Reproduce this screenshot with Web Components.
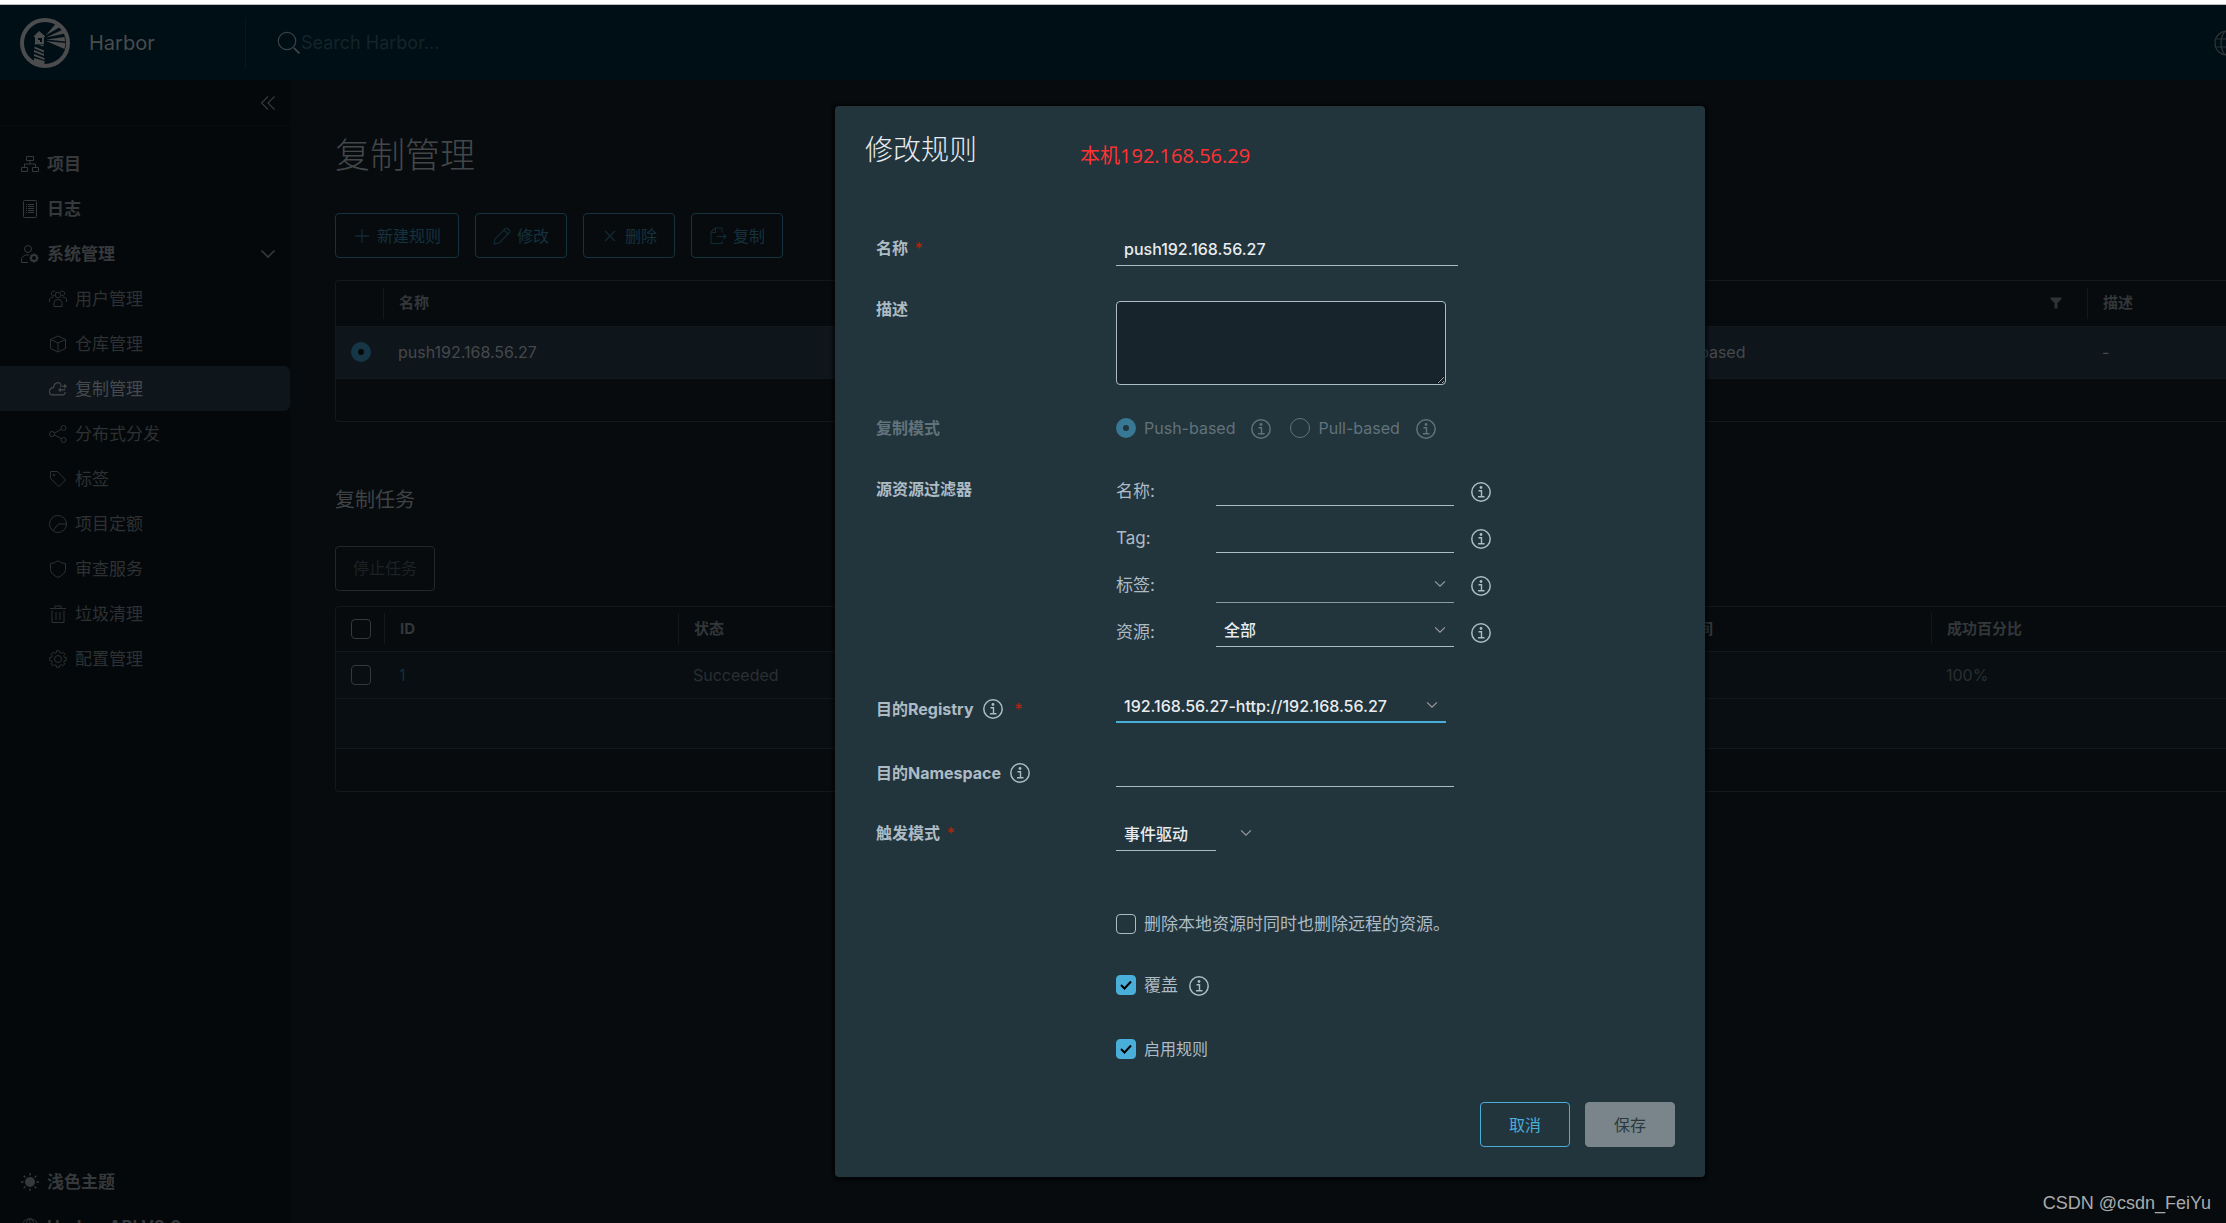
<!DOCTYPE html>
<html lang="zh-CN">
<head>
<meta charset="utf-8">
<title>Harbor</title>
<style>
  html, body { margin: 0; height: 100%; overflow: hidden; background: #070b0e; }
  body { font-family: Inter, "Noto Sans CJK SC", sans-serif; font-size: 16px; line-height: 24px; color: #45494c; }
</style>
</head>
<body>
<harbor-app></harbor-app>
<script>
// Outline of a cog with eight teeth, centred in an 18 x 18 box.
const cog = () => {
  const pts = [];
  for (let i = 0; i < 8; i++) {
    for (const [da, r] of [[-15, 6.6], [-10, 8.4], [10, 8.4], [15, 6.6]]) {
      const a = (i * 45 + da) * Math.PI / 180;
      pts.push((9 + r * Math.sin(a)).toFixed(2) + ' ' + (9 - r * Math.cos(a)).toFixed(2));
    }
  }
  return 'M' + pts.join('L') + 'Z';
};

const ICONS = {
  logo: ['0 0 50 50', `<circle cx="25" cy="25" r="23" fill="none" stroke="currentColor" stroke-width="4"/>
    <path fill="currentColor" d="M19 13l-5 5v1h1v7h9v-7h1v-1zM18 20h4v4h-2v-2h-2zM25.500 17.500L36 5.500l4 3.500zM26 19.500l17-8 2 4zM26.500 21.500l18-2.500.7 4.500zM26 23l19.500 2-1 6z"/>
    <path fill="currentColor" d="M14.500 26.500h9v2l-9-3zM14.500 28.500l9.500 4v2l-9.500-4zM14 32l10 4v2l-10-4zM14 36l10.500 4v2L14 38zM14 40l10.500 3v5L14 46z"/>`],
  search: ['0 0 24 24', '<g fill="none" stroke="currentColor" stroke-width="1.2"><circle cx="10" cy="10" r="8.700"/><path d="M16.800 16.800l5.700 5.700" stroke-width="1.800"/></g>'],
  globe: ['0 0 26 26', '<g fill="none" stroke="currentColor" stroke-width="1.2"><circle cx="13" cy="13" r="12"/><ellipse cx="13" cy="13" rx="6" ry="12"/><path d="M13 1v24M2.500 9h21M2.500 17h21"/></g>'],
  collapse: ['0 0 18 18', '<path fill="none" stroke="currentColor" stroke-width="1.2" d="M9 2.500L2.500 9 9 15.500M15.500 2.500L9 9l6.500 6.500"/>'],
  caret: ['0 0 16 16', '<path fill="none" stroke="currentColor" stroke-width="1.6" d="M1.500 4.500L8 11l6.500-6.500"/>'],
  project: ['0 0 18 18', '<g fill="none" stroke="currentColor"><path d="M5.500 1.500h7v4h-7zM.500 12.500h6v4h-6zM11.500 12.500h6v4h-6zM9 5.500V9M3.500 12V9h11v3"/></g>'],
  log: ['0 0 18 18', '<g fill="none" stroke="currentColor"><rect x="2.500" y=".5" width="13" height="17" rx="1"/><path d="M5 4.500h1M7 4.500h6M5 6.500h1M7 6.500h6M5 8.500h1M7 8.500h6M5 10.500h1M7 10.500h6M5 12.500h1M7 12.500h6"/></g>'],
  admin: ['0 0 18 18', '<g fill="none" stroke="currentColor"><circle cx="7" cy="4" r="3.500"/><path d="M7 17.500H.500v-4C2 10.500 5 9.500 8 10"/><circle cx="13" cy="13" r="3" stroke-width="2"/><path d="M13 8.500v2M13 15.500v2M8.500 13h2M15.500 13h2M10 10l1 1M15 15l1 1M16 10l-1 1M11 15l-1 1" stroke-width="1.600"/></g>'],
  users: ['0 0 18 18', '<g fill="none" stroke="currentColor"><circle cx="9" cy="5" r="2.800"/><path d="M5 16.500v-4q0-3 4-3t4 3v4zM5.500 5.500A2.300 2.300 0 1 1 6.500 2M12.500 5.500A2.300 2.300 0 1 0 11.500 2M.500 12V9q1-2 4-2M17.500 12V9q-1-2-4-2"/></g>'],
  cube: ['0 0 18 18', '<path fill="none" stroke="currentColor" d="M9 1l7.500 3.500v9L9 17l-7.500-3.500v-9zM1.500 4.500L9 8l7.500-3.500M9 8v9"/>'],
  replicate: ['0 0 20 18', '<g fill="none" stroke="currentColor" stroke-width="1.200"><path d="M13.500 4.500C11-.500 5 2.500 5 7.500 1.500 7.500.600 10 .600 12s1 3.500 3 3.500h12q2 0 2.500-3"/><path d="M12 6h7M17 4l2 2-2 2M18 10h-7M13 8l-2 2 2 2"/></g>'],
  share: ['0 0 18 18', '<g fill="none" stroke="currentColor"><circle cx="3" cy="9" r="2.500"/><circle cx="14.500" cy="3" r="2.500"/><circle cx="14.500" cy="15" r="2.500"/><path d="M5.500 8L12 4.500M5.500 10l6.500 3.500"/></g>'],
  tag: ['0 0 18 18', '<g fill="none" stroke="currentColor"><path d="M1.500 1.500h7l8 8.500-6.500 6.500-8.500-8z"/><circle cx="5" cy="5" r=".8"/></g>'],
  quota: ['0 0 18 18', '<g fill="none" stroke="currentColor"><circle cx="9" cy="9" r="8.500"/><path d="M4 15.500L9.500 9h8"/></g>'],
  shield: ['0 0 18 18', '<path fill="none" stroke="currentColor" d="M9 .700q3.500 2.800 7.500 2.800v6q-.5 5-7.500 8-7-3-7.500-8v-6q4 0 7.500-2.800z"/>'],
  trash: ['0 0 18 18', '<path fill="none" stroke="currentColor" d="M1 3.500h16M6 3V1h6v2M3 5.500v12h12v-12M7 7v8M11 7v8"/>'],
  gear: ['0 0 18 18', `<g fill="none" stroke="currentColor" stroke-linejoin="round"><circle cx="9" cy="9" r="3.500"/><path d="${cog()}"/></g>`],
  sun: ['0 0 18 18', '<circle cx="9" cy="9" r="5" fill="currentColor"/><path fill="none" stroke="currentColor" stroke-width="1.400" d="M9 0v2.500M9 15.500V18M0 9h2.500M15.500 9H18M2.700 2.700l1.700 1.700M13.600 13.600l1.700 1.700M15.300 2.700l-1.700 1.700M4.400 13.600l-1.700 1.700"/>'],
  plus: ['0 0 18 18', '<path fill="none" stroke="currentColor" stroke-width="1.300" d="M9 2v14M2 9h14"/>'],
  pencil: ['0 0 18 18', '<path fill="none" stroke="currentColor" stroke-width="1.100" d="M1 17l1-5L12.500 1.500q1-1 2 0l2 2q1 1 0 2L6 16zM11 3l4 4"/>'],
  times: ['0 0 18 18', '<path fill="none" stroke="currentColor" stroke-width="1.200" d="M4 4l10 10M14 4L4 14"/>'],
  copy: ['0 0 18 18', '<path fill="none" stroke="currentColor" stroke-width="1.100" d="M13 5.500v-4.500H6L2 5v11.500h11V14M6.500 1v4.500H2M8 9.500h9M14.500 7l2.500 2.500-2.500 2.500"/>'],
  filter: ['0 0 12 12', '<path fill="currentColor" d="M.500.500h11v1.500L7.500 6v5.500h-3V6l-4-4z"/>'],
  info: ['0 0 20 20', '<circle cx="10" cy="10" r="9.200" fill="none" stroke="currentColor" stroke-width="1.500"/><circle cx="10" cy="5.500" r="1.400" fill="currentColor"/><path fill="none" stroke="currentColor" stroke-width="1.400" d="M7.500 8.700h3v6M7 14.800h6.500"/>']
};

const define = (name, html, setup) => {
  const tpl = document.createElement('template');
  tpl.innerHTML = html;
  customElements.define(name, class extends HTMLElement {
    connectedCallback() {
      if (this.shadowRoot) return;
      this.attachShadow({ mode: 'open' }).append(tpl.content.cloneNode(true));
      if (setup) setup.call(this, this.shadowRoot);
    }
  });
};

define('h-icon', `<style>:host{display:inline-flex;flex:none;width:18px;height:18px}svg{width:100%;height:100%;display:block}</style>`,
  function (root) {
    const [box, body] = ICONS[this.getAttribute('name')];
    root.innerHTML += `<svg viewBox="${box}" aria-hidden="true">${body}</svg>`;
  });

define('harbor-header', `
<style>
  :host { display: flex; align-items: center; height: 75px; flex: none; background: #000f15; overflow: hidden; color: #4a4c4e; }
  .brand { display: flex; align-items: center; gap: 19px; width: 225px; padding-left: 20px; height: 50px; border-right: 1px solid #07181d; color: inherit; text-decoration: none; font-size: 20px; }
  .brand h-icon { width: 50px; height: 50px; }
  label { display: flex; align-items: center; flex: 1; padding-left: 31px; color: #3b4245; }
  label h-icon { width: 24px; height: 24px; }
  input { flex: 1; background: none; border: 0; outline: 0; padding: 0; font: inherit; font-size: 18px; color: inherit; }
  input::placeholder { color: #15242a; opacity: 1; }
  button { background: none; border: 0; padding: 0; margin-right: -14px; color: #2b3539; display: flex; }
  button h-icon { width: 26px; height: 26px; }
</style>
<a class="brand" href="#"><h-icon name="logo"></h-icon><span>Harbor</span></a>
<label><h-icon name="search"></h-icon><input type="text" placeholder="Search Harbor..." aria-label="Search"></label>
<button type="button" aria-label="语言"><h-icon name="globe"></h-icon></button>`);

define('nav-item', `
<style>
  :host { display: block; font-size: 17px; color: #36393c; font-weight: 700; }
  :host([sub]) { font-weight: 400; color: #2d3134; }
  :host([active]) { color: #474a4c; background: #0e161c; border-radius: 0 6px 6px 0; }
  a { display: flex; align-items: center; gap: 8px; height: 45px; padding: 0 14px 0 21px; color: inherit; text-decoration: none; }
  :host([sub]) a { padding-left: 49px; }
  .end { margin-left: auto; width: 16px; height: 16px; }
</style>
<a href="#"><slot></slot></a>`,
  function (root) {
    const a = root.querySelector('a');
    const icon = document.createElement('h-icon');
    icon.setAttribute('name', this.getAttribute('icon'));
    a.prepend(icon);
    if (this.hasAttribute('open')) {
      const caret = document.createElement('h-icon');
      caret.setAttribute('name', 'caret');
      caret.className = 'end';
      a.append(caret);
    }
  });

define('harbor-sidenav', `
<style>
  :host { display: flex; flex-direction: column; width: 290px; flex: none; background: #04080a; overflow: hidden; }
  .top { display: flex; justify-content: flex-end; align-items: center; height: 45px; padding-right: 13px; border-bottom: 1px solid #090d10; flex: none; }
  button { background: none; border: 0; padding: 0; display: flex; color: #36393c; }
  nav { margin-top: 15px; }
  footer { margin-top: auto; margin-bottom: -26px; }
</style>
<div class="top"><button type="button" aria-label="收起"><h-icon name="collapse"></h-icon></button></div>
<nav>
  <nav-item icon="project">项目</nav-item>
  <nav-item icon="log">日志</nav-item>
  <nav-item icon="admin" open>系统管理</nav-item>
  <nav-item sub icon="users">用户管理</nav-item>
  <nav-item sub icon="cube">仓库管理</nav-item>
  <nav-item sub active icon="replicate">复制管理</nav-item>
  <nav-item sub icon="share">分布式分发</nav-item>
  <nav-item sub icon="tag">标签</nav-item>
  <nav-item sub icon="quota">项目定额</nav-item>
  <nav-item sub icon="shield">审查服务</nav-item>
  <nav-item sub icon="trash">垃圾清理</nav-item>
  <nav-item sub icon="gear">配置管理</nav-item>
</nav>
<footer>
  <nav-item icon="sun">浅色主题</nav-item>
  <nav-item icon="globe">Harbor API V2.0</nav-item>
</footer>`);

define('h-button', `
<style>
  :host { display: block; }
  button { display: flex; align-items: center; justify-content: center; gap: 6px; height: 45px; min-width: 92px; padding: 0 17px; border: 1px solid #15323f; border-radius: 4px; background: none; color: #15323f; font: inherit; font-size: 16px; }
  :host([kind=off]) button { border-color: #23272a; color: #1d2124; }
  :host([kind=outline]) button { border-color: #49afd9; color: #49afd9; min-width: 90px; }
  :host([kind=solid]) button { border-color: #79858a; background: #79858a; color: #2b383e; min-width: 90px; }
</style>
<button type="button"><slot name="icon"></slot><slot></slot></button>`,
  function (root) { root.querySelector('button').disabled = this.hasAttribute('disabled'); });

const GRID = `
  :host { display: block; }
  .box { border: 1px solid #14181b; border-right: 0; border-radius: 4px 0 0 4px; }
  table { width: 100%; border-collapse: collapse; table-layout: fixed; }
  th, td { text-align: left; padding: 0 0 0 15px; white-space: nowrap; box-sizing: border-box; }
  th { height: 45px; font-size: 15px; font-weight: 700; color: #33373a; padding: 0; }
  th div { display: flex; align-items: center; height: 31px; line-height: 24px; padding-left: 15px; border-left: 1px solid #14181b; }
  th:first-child div { border-left: 0; padding-left: 15px; }
  tbody tr { border-top: 1px solid #14181b; border-bottom: 1px solid #14181b; }
  input { appearance: none; display: block; margin: 0; width: 20px; height: 20px; box-sizing: border-box; border: 1px solid #33383b; border-radius: 4px; }
  .foot { height: 42px; }
  h-icon { margin-left: auto; margin-right: 25px; width: 12px; height: 12px; color: #2f3336; }
`;

define('rule-table', `
<style>${GRID}
  td { height: 52px; background: #0e151b; color: #45494c; }
  input[type=radio] { border-radius: 50%; border: 7px solid #163646; background: #05090b; }
</style>
<div class="box">
  <table>
    <colgroup><col style="width:47px"><col><col style="width:448px"><col style="width:139px"></colgroup>
    <thead><tr><th></th><th><div>名称</div></th><th><div><h-icon name="filter"></h-icon></div></th><th><div>描述</div></th></tr></thead>
    <tbody><tr><td><input type="radio" checked aria-label="push192.168.56.27"></td><td>push192.168.56.27</td><td>Push-based</td><td>-</td></tr></tbody>
  </table>
  <div class="foot"></div>
</div>`);

define('task-table', `
<style>${GRID}
  td { height: 47px; background: #080e11; color: #2b2f32; }
  .empty td { height: 50px; }
  a { color: #13303c; text-decoration: none; }
</style>
<div class="box">
  <table>
    <colgroup><col style="width:48px"><col style="width:294px"><col><col style="width:294px"><col style="width:295px"></colgroup>
    <thead><tr><th><div><input type="checkbox" aria-label="全选"></div></th><th><div>ID</div></th><th><div>状态</div></th><th><div>创建时间</div></th><th><div>成功百分比</div></th></tr></thead>
    <tbody>
      <tr><td><input type="checkbox" aria-label="1"></td><td><a href="#">1</a></td><td>Succeeded</td><td></td><td>100%</td></tr>
      <tr class="empty"><td colspan="5"></td></tr>
    </tbody>
  </table>
  <div class="foot"></div>
</div>`);

define('replication-page', `
<style>
  :host { display: block; flex: 1; min-width: 0; padding: 50px 0 0 45px; background: #070b0e; overflow: hidden; }
  h1 { margin: 0; font-size: 35px; line-height: 50px; font-weight: 300; color: #434749; }
  h2 { margin: 65px 0 0; font-size: 20px; line-height: 26px; font-weight: 400; color: #3f4346; }
  .bar { display: flex; gap: 16px; margin: 33px 0 22px; }
  h2 + .bar { margin: 33px 0 15px; }
  h-button h-icon { opacity: .8; }
</style>
<h1>复制管理</h1>
<div class="bar">
  <h-button><h-icon slot="icon" name="plus"></h-icon>新建规则</h-button>
  <h-button><h-icon slot="icon" name="pencil"></h-icon>修改</h-button>
  <h-button><h-icon slot="icon" name="times"></h-icon>删除</h-button>
  <h-button><h-icon slot="icon" name="copy"></h-icon>复制</h-button>
</div>
<rule-table></rule-table>
<h2>复制任务</h2>
<div class="bar"><h-button kind="off" disabled>停止任务</h-button></div>
<task-table></task-table>`);

define('form-row', `
<style>
  :host { display: flex; align-items: flex-start; margin-top: 28px; }
  :host([gap=none]) { margin-top: 0; }
  :host([gap=small]) { margin-top: 25px; }
  :host([gap=large]) { margin-top: 35px; }
  :host([gap=section]) { margin-top: 55px; }
  .label { display: flex; align-items: center; gap: 9px; box-sizing: border-box; width: 240px; flex: none; height: 36px; font-weight: 700; }
  :host([label=top]) .label { height: 16px; }
  :host([label=low]) .label { padding-top: 8px; }
  .control { display: flex; align-items: center; flex: 1; min-width: 0; min-height: 36px; }
</style>
<div class="label"><slot name="label"></slot></div>
<div class="control"><slot></slot></div>`);

define('select-box', `
<style>
  :host { display: grid; align-items: center; }
  ::slotted(select), h-icon { grid-area: 1 / 1; }
  h-icon { justify-self: end; width: 12px; height: 12px; margin-right: 8px; color: #9a9a9a; pointer-events: none; }
</style>
<slot></slot><h-icon name="caret"></h-icon>`);

define('rule-dialog', `
<style>
  :host { display: flex; flex-direction: column; box-sizing: border-box; width: 870px; padding: 24px 30px 30px; background: #22343c; border-radius: 4px; box-shadow: 0 1px 3px 3px rgba(0,0,0,.5); color: #adbbc4; }
  header { display: flex; align-items: center; gap: 103px; height: 40px; margin-bottom: 60px; }
  h2 { margin: 0; font-size: 28px; line-height: 40px; font-weight: 300; color: #e9ecef; }
  .note { padding-top: 12px; font-family: "Open Sans", "Noto Sans CJK SC", sans-serif; font-size: 20px; color: #ff3333; }
  form { padding: 0 11px; }
  .req { margin-left: 3px; color: #b3260b; font-weight: 400; }
  .off { color: #61727a; }
  h-icon { width: 20px; height: 20px; }
  input[type=text], select, textarea { box-sizing: border-box; margin: 0; border: 0; border-radius: 0; border-bottom: 1px solid #adbbc4; background: none; outline: 0; appearance: none; font: inherit; font-weight: 500; color: #e9ecef; height: 35px; padding: 2px 8px 0; width: 100%; }
  textarea { display: block; width: 330px; height: 84px; border: 1px solid #adbbc4; border-radius: 4px; background: #17242b; }
  .reg { width: 330px; }
  #name { width: 342px; }
  #ns { width: 338px; }
  #registry { height: 36px; padding-top: 4px; border-bottom: 2px solid #49afd9; }
  #trigger { width: 100px; }
  .trig { width: 144px; }
  .lines { display: block; }
  .line { display: flex; align-items: flex-start; height: 47px; font-size: 17px; }
  .line label { width: 100px; flex: none; line-height: 40px; }
  .line input, .line select-box { width: 238px !important; font-size: 16px; }
  .line h-icon { margin: 11px 0 0 17px; }
  #labels { height: 38px; border-color: #8e9a9d; }
  .pick { display: flex; align-items: center; gap: 8px; }
  .text { font-size: 17px; }
  .pick + h-icon { margin: 2px 19px 0 16px; }
  .text + h-icon { margin: 2px 0 0 11px; }
  input[type=radio], input[type=checkbox] { appearance: none; box-sizing: border-box; margin: 0; width: 20px; height: 20px; flex: none; border: 1px solid #adbbc4; border-radius: 4px; }
  input[type=radio] { border-radius: 50%; border-color: #61727a; }
  input[type=radio]:checked { border: 7px solid #387894; }
  .tick { display: grid; color: #000; }
  .tick > * { grid-area: 1 / 1; }
  .tick svg { width: 20px; height: 20px; pointer-events: none; }
  input[type=checkbox]:checked { background: #49afd9; border-color: #49afd9; }
  footer { display: flex; justify-content: flex-end; gap: 15px; margin-top: 35px; }
</style>
<header><h2>修改规则</h2><span class="note">本机192.168.56.29</span></header>
<form>
  <form-row gap="none"><label slot="label" for="name">名称 <span class="req">*</span></label><input id="name" type="text" value="push192.168.56.27"></form-row>
  <form-row gap="large" label="top"><label slot="label" for="desc">描述</label><textarea id="desc"></textarea></form-row>
  <form-row gap="small"><span slot="label" class="off">复制模式</span>
    <label class="pick off"><input type="radio" name="mode" checked disabled>Push-based</label><h-icon class="off" name="info"></h-icon>
    <label class="pick off"><input type="radio" name="mode" disabled>Pull-based</label><h-icon class="off" name="info"></h-icon>
  </form-row>
  <form-row gap="small"><span slot="label">源资源过滤器</span>
    <div class="lines">
      <div class="line"><label for="fname">名称:</label><input id="fname" type="text"><h-icon name="info"></h-icon></div>
      <div class="line"><label for="ftag">Tag:</label><input id="ftag" type="text"><h-icon name="info"></h-icon></div>
      <div class="line"><label for="labels">标签:</label><select-box><select id="labels"><option></option></select></select-box><h-icon name="info"></h-icon></div>
      <div class="line"><label for="res">资源:</label><select-box><select id="res"><option>全部</option></select></select-box><h-icon name="info"></h-icon></div>
    </div>
  </form-row>
  <form-row label="low"><label slot="label" for="registry">目的Registry</label><h-icon slot="label" name="info"></h-icon><span slot="label" class="req">*</span>
    <select-box class="reg"><select id="registry"><option>192.168.56.27-http://192.168.56.27</option></select></select-box></form-row>
  <form-row label="low"><label slot="label" for="ns">目的Namespace</label><h-icon slot="label" name="info"></h-icon><input id="ns" type="text"></form-row>
  <form-row><label slot="label" for="trigger">触发模式 <span class="req">*</span></label><select-box class="trig"><select id="trigger"><option>事件驱动</option></select></select-box></form-row>
  <form-row gap="section"><label class="pick text"><input type="checkbox">删除本地资源时同时也删除远程的资源。</label></form-row>
  <form-row gap="small"><label class="pick text"><span class="tick"><input type="checkbox" checked><svg viewBox="0 0 20 20"><path d="M5 10l3.500 3.500L15 6.500" fill="none" stroke="#000" stroke-width="2"/></svg></span>覆盖</label><h-icon name="info"></h-icon></form-row>
  <form-row><label class="pick"><span class="tick"><input type="checkbox" checked><svg viewBox="0 0 20 20"><path d="M5 10l3.500 3.500L15 6.500" fill="none" stroke="#000" stroke-width="2"/></svg></span>启用规则</label></form-row>
</form>
<footer><h-button kind="outline">取消</h-button><h-button kind="solid" disabled>保存</h-button></footer>`);

define('harbor-app', `
<style>
  :host { display: flex; flex-direction: column; height: 100vh; overflow: hidden; }
  .strip { height: 4px; flex: none; background: #fff; border-bottom: 1px solid #b9bfc1; }
  .body { display: flex; flex: 1; min-height: 0; }
  .overlay { position: absolute; inset: 0; display: flex; align-items: flex-start; justify-content: center; padding: 106px 0 0 314px; pointer-events: none; }
  rule-dialog { pointer-events: auto; }
  .mark { position: absolute; right: 15px; bottom: 8px; font-family: "Liberation Sans", Arial, sans-serif; font-size: 18px; color: #a9abac; }
</style>
<div class="strip"></div>
<harbor-header></harbor-header>
<div class="body"><harbor-sidenav></harbor-sidenav><replication-page></replication-page></div>
<div class="overlay"><rule-dialog role="dialog" aria-label="修改规则"></rule-dialog></div>
<div class="mark">CSDN @csdn_FeiYu</div>`);
</script>
</body>
</html>
